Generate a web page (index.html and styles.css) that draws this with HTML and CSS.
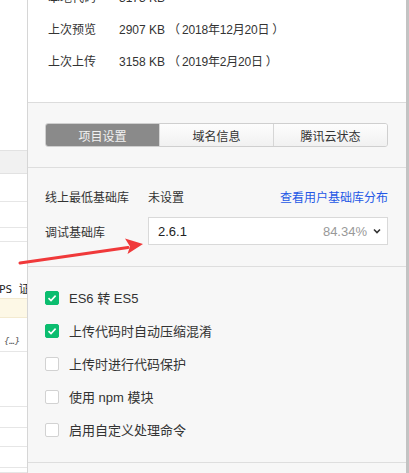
FILE: index.html
```html
<!DOCTYPE html>
<html lang="zh-CN">
<head>
<meta charset="utf-8">
<link rel="stylesheet" href="styles.css">
</head>
<body>
<div class="screen">
  <div class="side">
    <div class="s-blank"></div>
    <div class="s-head"></div>
    <div class="s-row h28"></div>
    <div class="s-row h26"></div>
    <div class="s-row h14"></div>
    <div class="s-text"><span class="mono">PS 证</span></div>
    <div class="s-yellow"></div>
    <div class="s-obj"><span class="obj">{…}</span></div>
    <div class="s-row h55"></div>
    <div class="s-row h21"></div>
    <div class="s-row h19"></div>
    <div class="s-row h21"></div>
    <div class="s-row h5 last"></div>
  </div>
  <div class="panel">
    <div class="info">
      <div class="info-row"><span class="info-label">本地代码</span><span>3173 KB</span></div>
      <div class="info-row"><span class="info-label">上次预览</span><span>2907 KB<span class="paren">（</span><span class="date">2018年12月20日</span><span class="paren end">）</span></span></div>
      <div class="info-row"><span class="info-label">上次上传</span><span>3158 KB<span class="paren">（</span><span class="date">2019年2月20日</span><span class="paren end">）</span></span></div>
    </div>
    <div class="tabs-sec">
      <div class="tabs">
        <div class="tab active">项目设置</div>
        <div class="tab">域名信息</div>
        <div class="tab">腾讯云状态</div>
      </div>
    </div>
    <div class="lib-sec">
      <div class="lib-row">
        <span class="lib-label">线上最低基础库</span>
        <span class="lib-value">未设置</span>
        <span class="lib-link">查看用户基础库分布</span>
      </div>
      <div class="lib-row">
        <span class="lib-label">调试基础库</span>
        <div class="select">
          <span class="sel-ver">2.6.1</span>
          <span class="sel-pct">84.34%</span>
          <svg class="chev" width="8" height="6" viewBox="0 0 8 6"><path d="M1 1.5 L4 4.5 L7 1.5" fill="none" stroke="#333" stroke-width="1.6"/></svg>
        </div>
      </div>
    </div>
    <div class="checks">
      <div class="check-row"><span class="box on"><svg width="14" height="14" viewBox="0 0 14 14"><path d="M3.5 7.2 L6 9.6 L10.6 4.6" fill="none" stroke="#fff" stroke-width="1.6"/></svg></span><span>ES6 转 ES5</span></div>
      <div class="check-row"><span class="box on"><svg width="14" height="14" viewBox="0 0 14 14"><path d="M3.5 7.2 L6 9.6 L10.6 4.6" fill="none" stroke="#fff" stroke-width="1.6"/></svg></span><span>上传代码时自动压缩混淆</span></div>
      <div class="check-row"><span class="box"></span><span>上传时进行代码保护</span></div>
      <div class="check-row"><span class="box"></span><span>使用 npm 模块</span></div>
      <div class="check-row"><span class="box"></span><span>启用自定义处理命令</span></div>
    </div>
    <div class="foot"></div>
  </div>
  <div class="scrollbar"></div>
  <svg class="arrow" width="409" height="473" viewBox="0 0 409 473">
    <path d="M20 263 L128 247.5" stroke="#f0393a" stroke-width="3" stroke-linecap="round" fill="none"/>
    <path d="M143 244 L125 238.5 L130 246.5 L127.5 254 Z" fill="#f0393a"/>
  </svg>
</div>
</body>
</html>
```

FILE: styles.css
```css
* { box-sizing: border-box; }
html, body { margin: 0; padding: 0; }
body {
  font-family: "Liberation Sans", "Noto Sans CJK SC", sans-serif;
  font-size: 12px;
  color: #333;
  background: #fff;
}
.screen {
  position: relative;
  width: 409px;
  height: 473px;
  display: flex;
  overflow: hidden;
}
.side {
  width: 28px;
  border-right: 1px solid #d6d6d6;
  background: #fff;
  display: flex;
  flex-direction: column;
  flex-shrink: 0;
}
.s-blank { height: 150px; }
.s-head { height: 24px; background: #f1f1f1; border-top: 1px solid #e2e2e2; border-bottom: 1px solid #e2e2e2; }
.s-row { border-bottom: 1px solid #e6e6e6; }
.h28 { height: 28px; }
.h26 { height: 26px; }
.h14 { height: 14px; }
.h55 { height: 55px; }
.h21 { height: 21px; }
.h19 { height: 19px; }
.h5 { height: 5px; }
.s-text {
  height: 56px;
  display: flex;
  align-items: flex-end;
  padding-bottom: 2px;
  overflow: hidden;
  white-space: nowrap;
}
.mono { font-family: "DejaVu Sans Mono", "Noto Sans CJK SC", monospace; font-size: 11px; color: #222; margin-left: -1px; }
.s-yellow { height: 20px; background: #fdf8e6; border-top: 1px solid #f3ead0; border-bottom: 1px solid #f3ead0; }
.s-obj {
  height: 34px;
  border-bottom: 1px solid #e6e6e6;
  display: flex;
  align-items: flex-end;
  padding-bottom: 5px;
  padding-left: 4px;
  overflow: hidden;
  white-space: nowrap;
}
.obj { font-family: "DejaVu Sans Mono", monospace; font-style: italic; font-size: 9px; color: #555; }

.panel {
  width: 378px;
  flex-shrink: 0;
  background: #f7f7f7;
  display: flex;
  flex-direction: column;
}
.info {
  background: #fff;
  height: 103px;
  border-bottom: 1px solid #dcdcdc;
  padding-left: 20px;
  display: flex;
  flex-direction: column;
  justify-content: flex-end;
  padding-bottom: 24px;
  overflow: hidden;
}
.info-row {
  height: 32px;
  line-height: 32px;
  display: flex;
  flex-shrink: 0;
  color: #333;
  white-space: nowrap;
}
.info-label { width: 71px; }
.paren { margin: 0 2px 0 3px; }
.paren.end { margin: 0 0 0 3px; }
.date { letter-spacing: -0.2px; }

.tabs-sec {
  height: 65px;
  border-bottom: 1px solid #dedede;
  padding: 20px 18px 0 17px;
}
.tabs {
  display: flex;
  height: 24px;
  border: 1px solid #cfcfcf;
  border-radius: 3px;
  overflow: hidden;
}
.tab {
  flex: 1;
  display: flex;
  align-items: center;
  justify-content: center;
  background: linear-gradient(#fdfdfd, #f1f1f1);
  color: #333;
  border-left: 1px solid #d6d6d6;
}
.tab:first-child { border-left: none; }
.tab.active { background: #8a8a8a; color: #f2f2f2; }

.lib-sec {
  height: 99px;
  border-bottom: 1px solid #dedede;
  padding: 18px 18px 0 17px;
  display: flex;
  flex-direction: column;
  gap: 11px;
}
.lib-row {
  display: flex;
  align-items: center;
  min-height: 20px;
}
.lib-label { width: 103px; flex-shrink: 0; }
.lib-value { flex: 1; }
.lib-link { color: #2457e6; }
.select {
  flex: 1;
  height: 28px;
  background: #fff;
  border: 1px solid #d9d9d9;
  display: flex;
  align-items: center;
  padding: 0 6px 0 9px;
}
.sel-ver { flex: 1; font-size: 13px; color: #222; }
.sel-pct { font-size: 13px; color: #999; margin-right: 6px; }
.chev { display: block; }

.checks {
  height: 196px;
  border-bottom: 1px solid #dedede;
  padding: 14px 17px 0 17px;
  display: flex;
  flex-direction: column;
}
.check-row {
  height: 33px;
  display: flex;
  align-items: center;
  font-size: 13px;
  color: #333;
}
.box {
  width: 14px;
  height: 14px;
  border: 1px solid #d2d2d2;
  border-radius: 2px;
  background: #fff;
  margin-right: 10px;
  display: flex;
  align-items: center;
  justify-content: center;
}
.box.on { background: #0bbd6f; border-color: #0bbd6f; }
.box svg { display: block; flex-shrink: 0; }
.foot { flex: 1; }

.scrollbar { width: 3px; background: #c3c3c3; flex-shrink: 0; }
.arrow { position: absolute; left: 0; top: 0; pointer-events: none; }
```
